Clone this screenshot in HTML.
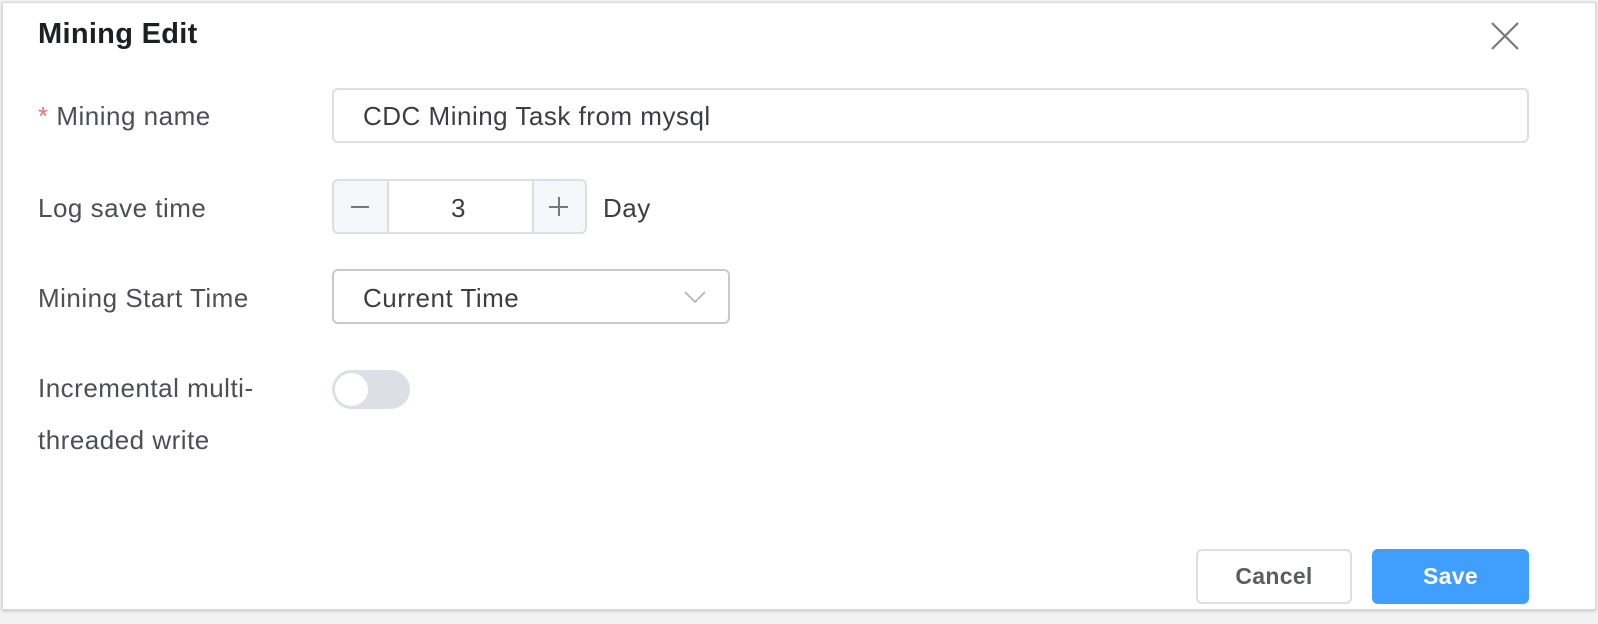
<!DOCTYPE html>
<html><head><style>
body{margin:0;width:1598px;height:624px;background:#f2f2f2;font-family:"Liberation Sans",Arial,sans-serif;position:relative;overflow:hidden}
.d{position:absolute;left:2px;top:2px;width:1592px;height:606px;background:#fff;border:1px solid #d8d8d8;box-shadow:0 1px 3px rgba(0,0,0,.2)}
.a{position:absolute}
.t{font-size:26px;letter-spacing:0.5px}
.lab{position:absolute;left:38px;font-size:26px;letter-spacing:0.5px;color:#4d4f53}
.box{position:absolute;border:2px solid #dcdee3;border-radius:6px;box-sizing:border-box;background:#fff}
</style></head><body>
<div class="d"></div>
<div class="a" style="left:38px;top:18px;font-size:29px;letter-spacing:0.3px;font-weight:bold;color:#1d1f23">Mining Edit</div>
<svg class="a" style="left:1489px;top:20px" width="32" height="32"><path d="M3 3L29 29M29 3L3 29" stroke="#777" stroke-width="2.2"/></svg>
<div class="lab" style="top:101px"><span style="color:#f56c6c">*</span> Mining name</div>
<div class="box" style="left:332px;top:88px;width:1197px;height:55px"></div>
<div class="a t" style="left:363px;top:101px;color:#3c3e42">CDC Mining Task from mysql</div>
<div class="lab" style="top:193px">Log save time</div>
<div class="box" style="left:332px;top:179px;width:255px;height:55px;background:#f5f7fa"></div>
<div class="a" style="left:387px;top:181px;width:143px;height:51px;background:#fff;border-left:2px solid #dcdee3;border-right:2px solid #dcdee3"></div>
<div class="a" style="left:351px;top:206px;width:18px;height:1.5px;background:#777"></div>
<div class="a" style="left:549px;top:206px;width:19px;height:1.5px;background:#777"></div>
<div class="a" style="left:558px;top:197px;width:1.5px;height:19px;background:#777"></div>
<div class="a t" style="left:451px;top:193px;color:#3c3e42">3</div>
<div class="a t" style="left:603px;top:193px;color:#3c3e42">Day</div>
<div class="lab" style="top:283px">Mining Start Time</div>
<div class="box" style="left:332px;top:269px;width:398px;height:55px;border-color:#c8cacf"></div>
<div class="a t" style="left:363px;top:283px;color:#3c3e42">Current Time</div>
<svg class="a" style="left:683px;top:290px" width="24" height="14"><path d="M2 2L12 12L22 2" stroke="#b0b3b8" stroke-width="1.6" fill="none"/></svg>
<div class="lab" style="top:362px;line-height:52px">Incremental multi-<br>threaded write</div>
<div class="a" style="left:332px;top:370px;width:78px;height:39px;border-radius:20px;background:#dcdfe6"></div>
<div class="a" style="left:335px;top:373px;width:33px;height:33px;border-radius:50%;background:#fff"></div>
<div class="box" style="left:1196px;top:549px;width:156px;height:55px"></div>
<div class="a" style="left:1196px;top:563px;width:156px;text-align:center;font-size:23px;letter-spacing:0.3px;font-weight:bold;color:#5b5d61">Cancel</div>
<div class="a" style="left:1372px;top:549px;width:157px;height:55px;border-radius:6px;background:#409eff"></div>
<div class="a" style="left:1372px;top:563px;width:157px;text-align:center;font-size:23px;letter-spacing:0.3px;font-weight:bold;color:#fff">Save</div>
</body></html>
